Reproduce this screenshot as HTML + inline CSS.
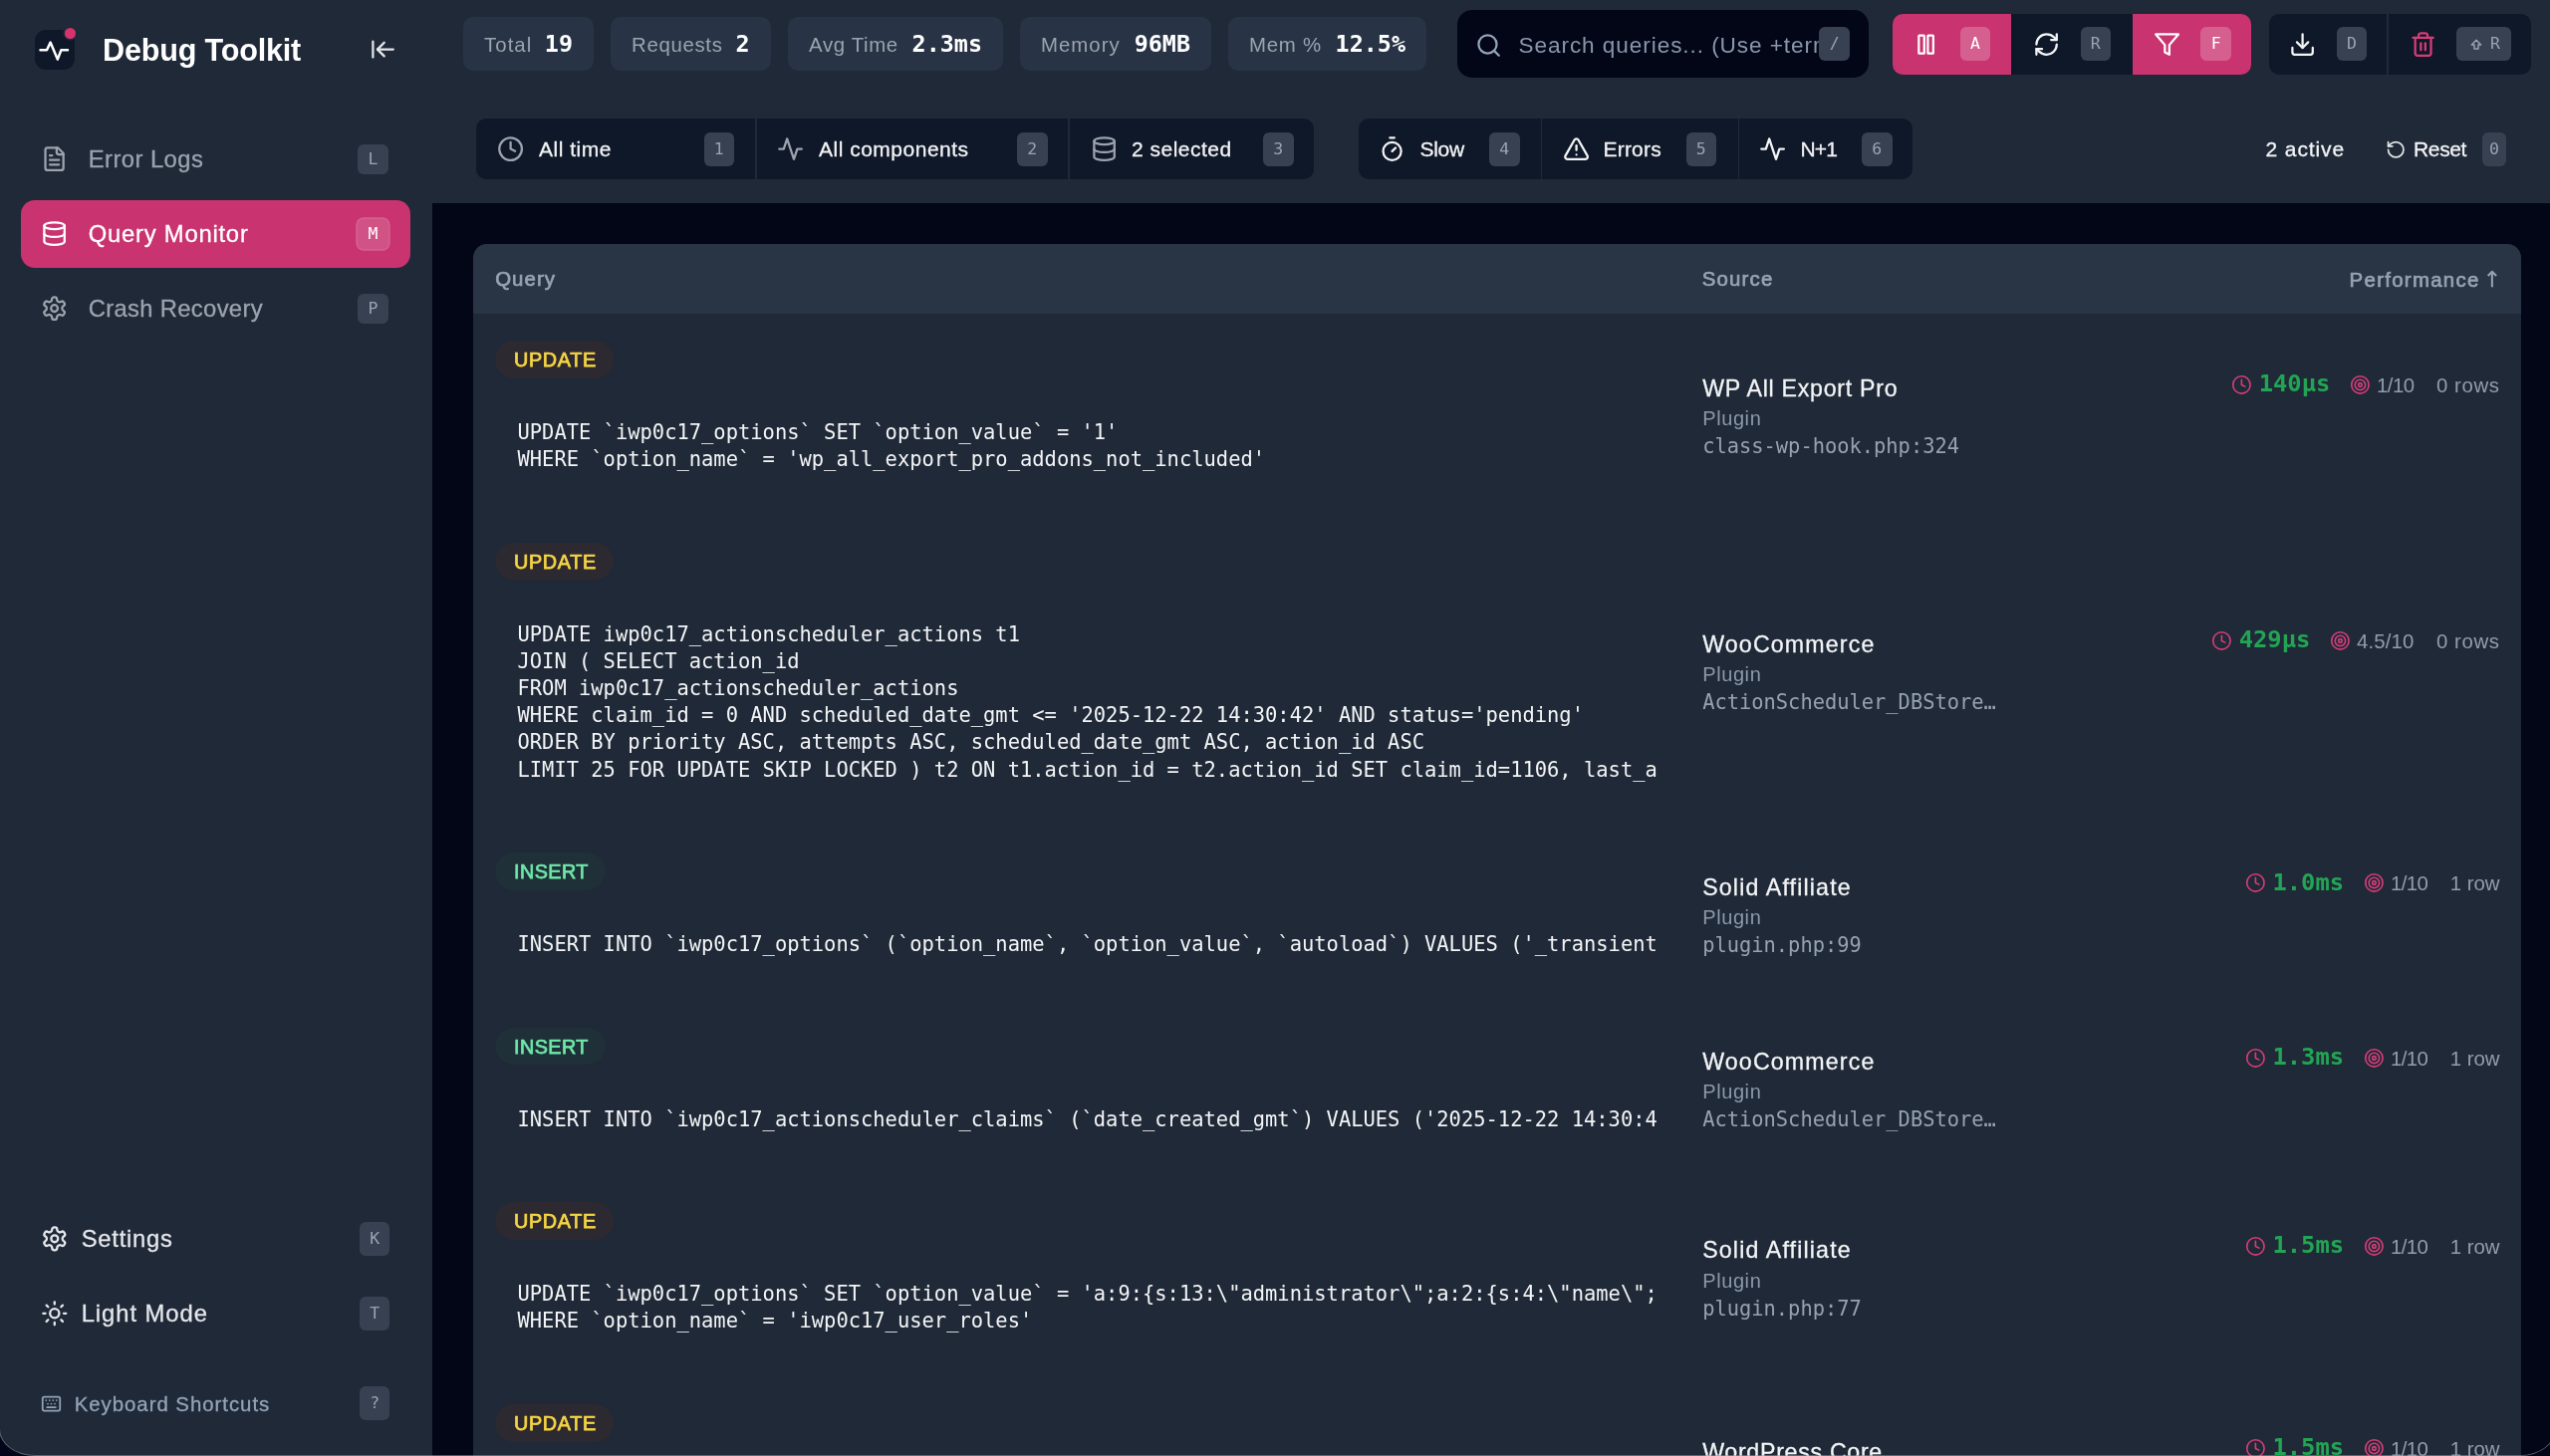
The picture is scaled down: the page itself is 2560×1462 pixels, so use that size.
<!DOCTYPE html>
<html lang="en">
<head>
<meta charset="utf-8">
<title>Debug Toolkit - Query Monitor</title>
<style>
*{box-sizing:border-box;margin:0;padding:0}
html,body{width:2560px;height:1462px;overflow:hidden;background:#020617}
body{position:relative;font-family:"Liberation Sans",sans-serif;color:#f3f4f6;-webkit-font-smoothing:antialiased}
.mono{font-family:"DejaVu Sans Mono","Liberation Mono",monospace}
svg{display:block;fill:none;stroke:currentColor;stroke-width:2;stroke-linecap:round;stroke-linejoin:round}
.abs{position:absolute}
#app{position:absolute;left:0;top:0;width:2560px;height:1462px;overflow:hidden;will-change:transform}
/* ---------- sidebar ---------- */
.sidebar{z-index:2;position:absolute;left:0;top:0;width:434px;height:1462px;background:#1f2937}
.logo{position:absolute;left:34.5px;top:29.5px;width:40px;height:40.5px;border-radius:11px;background:#0f1828;color:#fff}
.logo svg{position:absolute;left:0;top:0;width:40px;height:40px;stroke-width:2.5}
.logo i{position:absolute;left:30.2px;top:-1.2px;width:11px;height:11px;border-radius:50%;background:#d6336c;box-shadow:0 0 0 1.7px #1f2937}
.brand{position:absolute;left:103px;top:30px;height:40px;line-height:40px;font-size:30.6px;font-weight:700;color:#fff;white-space:nowrap;letter-spacing:-.2px}
.collapse{position:absolute;left:370.9px;top:36px;width:27.2px;height:27.2px;color:#e5e7eb}
.nav{position:absolute;left:20.7px;width:391.4px;height:68px;border-radius:14px;color:#9ca3af;font-size:23.8px;font-weight:500}
.nav svg{position:absolute;left:20.2px;top:20.3px;width:27.2px;height:27.2px;stroke-width:2}
.nav span{-webkit-text-stroke:.3px currentColor;position:absolute;left:68px;top:0;height:68px;line-height:68.6px;white-space:nowrap;letter-spacing:.45px}
.nav.active{background:#c9336f;color:#fff}
kbd{font-family:"DejaVu Sans Mono","Liberation Mono",monospace;font-style:normal;display:block;background:#374151;color:#9ca3af;border-radius:6px;text-align:center;font-size:16.5px;width:30.5px;height:30.6px;line-height:30.6px}
.nav kbd{position:absolute;left:338.6px;top:18.6px}
.nav.active kbd{background:rgba(255,255,255,.16);color:#fff;box-shadow:0 0 0 1.7px rgba(255,255,255,.22)}
.nav.low{color:#e5e7eb}
.nav.low svg{left:20.2px;width:27.6px;height:27.6px}
.nav.low span{left:61px}
.nav.low kbd{left:340.3px;top:17px;height:34px;line-height:34px}
.nav.tiny{color:#94a3b8;font-size:20.4px}
.nav.tiny svg{left:20px;top:24px;width:21px;height:21px}
.nav.tiny span{left:54px;letter-spacing:.5px;line-height:70.5px}
/* ---------- header ---------- */
.header{position:absolute;left:0;top:0;width:2560px;height:204px;background:#1f2937}
.pill{position:absolute;top:17px;height:54px;border-radius:10px;background:#283445;white-space:nowrap}
.pill b{position:absolute;top:0;line-height:56px;font-weight:400;font-size:20.4px;color:#9ca3af;left:21px;letter-spacing:.45px}
.pill em{position:absolute;top:0;line-height:55px;font-style:normal;font-weight:700;font-size:23.4px;color:#fff;right:21px}
.search{position:absolute;left:1463px;top:10px;width:413px;height:68px;border-radius:15px;background:#020617;color:#9ca3af;overflow:hidden}
.search svg{position:absolute;left:18.3px;top:22px;width:27.2px;height:27.2px;color:#94a3b8}
.search span{position:absolute;left:61.5px;top:0;line-height:71px;font-size:22.6px;white-space:nowrap;width:302px;overflow:hidden;letter-spacing:.92px;color:#8a97aa}
.search kbd{position:absolute;left:363.4px;top:17px;width:30.6px;height:34px;line-height:34px}
.grp{position:absolute;top:13.6px;height:61.2px;border-radius:10px;background:#0f1828;overflow:hidden}
.btn{position:absolute;top:0;height:61px;color:#f3f4f6}
.btn.on{background:#c9336f;color:#fff}
.btn svg{position:absolute;top:17px;width:27.2px;height:27.2px}
.btn kbd{position:absolute;top:13.6px;width:30.5px;height:34px;line-height:34px}
.btn.on kbd{background:rgba(255,255,255,.22);color:#fff}
.sep{position:absolute;top:0;width:1.7px;height:100%;background:#1f2937}
.fgrp{position:absolute;top:119px;height:61.2px;border-radius:10px;background:#0f1828;overflow:hidden}
.fb{position:absolute;top:0;height:61px;color:#f3f4f6;font-size:21px;font-weight:500;-webkit-text-stroke:.3px currentColor}
.fb svg{position:absolute;top:17px;width:27.2px;height:27.2px;color:#f3f4f6}
.fb.g svg{color:#9ca3af}
.fb span{position:absolute;top:0;line-height:61px;white-space:nowrap;letter-spacing:.5px}
.fb kbd{-webkit-text-stroke:0;position:absolute;top:14px;width:30.5px;height:34px;line-height:34px}
.active2{-webkit-text-stroke:.3px currentColor;position:absolute;top:119px;line-height:61px;font-size:21px;font-weight:500;color:#f3f4f6;white-space:nowrap;letter-spacing:.5px}
/* ---------- table ---------- */
.card{position:absolute;left:475.2px;top:245px;width:2055.4px;height:1300px;background:#1f2937;border-radius:14px 14px 0 0;overflow:hidden}
.thead{position:absolute;left:0;top:0;width:100%;height:69.5px;background:#293444;color:#98a2b1;font-size:20.4px;font-weight:400;-webkit-text-stroke:.7px currentColor}
.thead span{position:absolute;top:0;line-height:71.8px;white-space:nowrap;letter-spacing:.35px}
.row{position:absolute;left:0;width:100%}
.badge{position:absolute;left:21.9px;top:27.2px;height:37.6px;line-height:38.4px;border-radius:19px;padding:0 0 0 19px;width:119px;font-size:19.8px;font-weight:400;-webkit-text-stroke:.75px currentColor;letter-spacing:.65px}
.badge.i{width:111.3px;letter-spacing:.42px}
.badge.u{background:#2d2931;color:#f5d442}
.badge.i{background:#1f3038;color:#6ee7a8}
pre{position:absolute;left:44.3px;top:105.9px;width:1143.5px;overflow:hidden;font-family:"DejaVu Sans Mono","Liberation Mono",monospace;font-size:20.45px;line-height:27.2px;color:#f3f4f6;white-space:pre}
.src{position:absolute;left:1234px;white-space:nowrap}
.src .n{position:relative;top:1px;font-size:23.2px;font-weight:500;color:#f3f4f6;line-height:34px;letter-spacing:1.15px;-webkit-text-stroke:.3px currentColor}
.src .t{position:relative;top:1.2px;font-size:20px;color:#8c98aa;line-height:27.2px;letter-spacing:.6px}
.src .f{position:relative;top:2px;font-size:20.4px;color:#96a2b2;line-height:27.2px}
.perf{position:absolute;right:21px;height:30px;white-space:nowrap;display:flex;align-items:center;color:#929dae;font-size:20.4px}
.perf svg{width:20.8px;height:20.8px;color:#d63d78;flex:none;stroke-width:1.9}
.perf .v{position:relative;top:-1px;font-weight:700;font-size:23.8px;color:#23a455;margin-left:6.6px;margin-right:20px}
.perf .s{margin-left:6px;margin-right:22.5px;letter-spacing:-.6px;position:relative;top:1px}
.perf .r{letter-spacing:.6px;position:relative;top:1px}
.frame{z-index:10;position:absolute;left:-.6px;top:-40px;width:2567px;height:1502px;border-radius:36px / 27px;border:1.3px solid rgba(140,155,175,.55);box-shadow:0 0 0 1.5px rgba(5,8,18,.9),0 0 0 40px #03061a;pointer-events:none}
</style>
</head>
<body>
<div id="app">
<div class="sidebar">
  <div class="logo"><svg viewBox="0 0 40 40"><path d="M5.5 20.3H12L15.6 12.6L22.8 29.6L26.4 20.3H33"/></svg><i></i></div>
  <div class="brand">Debug Toolkit</div>
  <svg class="collapse" viewBox="0 0 24 24"><path d="M3 19V5"/><path d="m13 6-6 6 6 6"/><path d="M7 12h14"/></svg>

  <div class="nav" style="top:126px">
    <svg viewBox="0 0 24 24"><path d="M15 2H6a2 2 0 0 0-2 2v16a2 2 0 0 0 2 2h12a2 2 0 0 0 2-2V7Z"/><path d="M14 2v4a2 2 0 0 0 2 2h4"/><path d="M10 9H8"/><path d="M16 13H8"/><path d="M16 17H8"/></svg>
    <span>Error Logs</span><kbd>L</kbd>
  </div>
  <div class="nav active" style="top:201px">
    <svg viewBox="0 0 24 24"><ellipse cx="12" cy="5" rx="9" ry="3"/><path d="M3 5V19A9 3 0 0 0 21 19V5"/><path d="M3 12A9 3 0 0 0 21 12"/></svg>
    <span style="letter-spacing:0.78px">Query Monitor</span><kbd>M</kbd>
  </div>
  <div class="nav" style="top:276px">
    <svg viewBox="0 0 24 24"><path d="M12.22 2h-.44a2 2 0 0 0-2 2v.18a2 2 0 0 1-1 1.73l-.43.25a2 2 0 0 1-2 0l-.15-.08a2 2 0 0 0-2.73.73l-.22.38a2 2 0 0 0 .73 2.73l.15.1a2 2 0 0 1 1 1.72v.51a2 2 0 0 1-1 1.74l-.15.09a2 2 0 0 0-.73 2.73l.22.38a2 2 0 0 0 2.73.73l.15-.08a2 2 0 0 1 2 0l.43.25a2 2 0 0 1 1 1.73V20a2 2 0 0 0 2 2h.44a2 2 0 0 0 2-2v-.18a2 2 0 0 1 1-1.73l.43-.25a2 2 0 0 1 2 0l.15.08a2 2 0 0 0 2.73-.73l.22-.39a2 2 0 0 0-.73-2.73l-.15-.08a2 2 0 0 1-1-1.74v-.5a2 2 0 0 1 1-1.74l.15-.09a2 2 0 0 0 .73-2.73l-.22-.38a2 2 0 0 0-2.73-.73l-.15.08a2 2 0 0 1-2 0l-.43-.25a2 2 0 0 1-1-1.73V4a2 2 0 0 0-2-2z"/><circle cx="12" cy="12" r="3"/></svg>
    <span style="letter-spacing:0.33px">Crash Recovery</span><kbd>P</kbd>
  </div>

  <div class="nav low" style="top:1210px">
    <svg viewBox="0 0 24 24"><path d="M12.22 2h-.44a2 2 0 0 0-2 2v.18a2 2 0 0 1-1 1.73l-.43.25a2 2 0 0 1-2 0l-.15-.08a2 2 0 0 0-2.73.73l-.22.38a2 2 0 0 0 .73 2.73l.15.1a2 2 0 0 1 1 1.72v.51a2 2 0 0 1-1 1.74l-.15.09a2 2 0 0 0-.73 2.73l.22.38a2 2 0 0 0 2.73.73l.15-.08a2 2 0 0 1 2 0l.43.25a2 2 0 0 1 1 1.73V20a2 2 0 0 0 2 2h.44a2 2 0 0 0 2-2v-.18a2 2 0 0 1 1-1.73l.43-.25a2 2 0 0 1 2 0l.15.08a2 2 0 0 0 2.73-.73l.22-.39a2 2 0 0 0-.73-2.73l-.15-.08a2 2 0 0 1-1-1.74v-.5a2 2 0 0 1 1-1.74l.15-.09a2 2 0 0 0 .73-2.73l-.22-.38a2 2 0 0 0-2.73-.73l-.15.08a2 2 0 0 1-2 0l-.43-.25a2 2 0 0 1-1-1.73V4a2 2 0 0 0-2-2z"/><circle cx="12" cy="12" r="3"/></svg>
    <span style="letter-spacing:0.76px">Settings</span><kbd>K</kbd>
  </div>
  <div class="nav low" style="top:1285px">
    <svg viewBox="0 0 24 24"><circle cx="12" cy="12" r="4"/><path d="M12 2v2"/><path d="M12 20v2"/><path d="m4.93 4.93 1.41 1.41"/><path d="m17.66 17.66 1.41 1.41"/><path d="M2 12h2"/><path d="M20 12h2"/><path d="m6.34 17.66-1.41 1.41"/><path d="m19.07 4.93-1.41 1.41"/></svg>
    <span style="letter-spacing:0.95px">Light Mode</span><kbd>T</kbd>
  </div>
  <div class="nav low tiny" style="top:1375px">
    <svg viewBox="0 0 24 24"><rect width="20" height="16" x="2" y="4" rx="2"/><path d="M6 8h.01"/><path d="M10 8h.01"/><path d="M14 8h.01"/><path d="M18 8h.01"/><path d="M8 12h.01"/><path d="M12 12h.01"/><path d="M16 12h.01"/><path d="M7 16h10"/></svg>
    <span style="letter-spacing:0.97px">Keyboard Shortcuts</span><kbd>?</kbd>
  </div>
</div>

<div class="header" style="left:0;width:2560px"></div>
<div class="pill" style="left:465px;width:131px"><b style="letter-spacing:1.05px">Total</b><em class="mono">19</em></div>
<div class="pill" style="left:613px;width:160.5px"><b style="letter-spacing:0.68px">Requests</b><em class="mono">2</em></div>
<div class="pill" style="left:791px;width:216px"><b style="letter-spacing:0.65px">Avg Time</b><em class="mono">2.3ms</em></div>
<div class="pill" style="left:1024px;width:192px"><b style="letter-spacing:1.0px">Memory</b><em class="mono">96MB</em></div>
<div class="pill" style="left:1233px;width:199px"><b style="letter-spacing:0.75px">Mem %</b><em class="mono">12.5%</em></div>

<div class="search">
  <svg viewBox="0 0 24 24"><circle cx="11" cy="11" r="8"/><path d="m21 21-4.3-4.3"/></svg>
  <span>Search queries... (Use +term, -term, "phrase")</span>
  <kbd>/</kbd>
</div>

<div class="grp" style="left:1899.6px;width:360.8px">
  <div class="btn on" style="left:0;width:119.4px">
    <svg viewBox="0 0 24 24" style="left:20.5px"><rect x="13.6" y="4" width="4.8" height="16" rx=".4"/><rect x="5.6" y="4" width="4.8" height="16" rx=".4"/></svg>
    <kbd style="left:68px">A</kbd>
  </div>
  <div class="btn" style="left:119.4px;width:122px">
    <svg viewBox="0 0 24 24" style="left:21.8px"><path d="M3 12a9 9 0 0 1 9-9 9.75 9.75 0 0 1 6.74 2.74L21 8"/><path d="M21 3v5h-5"/><path d="M21 12a9 9 0 0 1-9 9 9.75 9.75 0 0 1-6.74-2.74L3 16"/><path d="M8 16H3v5"/></svg>
    <kbd style="left:69.6px">R</kbd>
  </div>
  <div class="btn on" style="left:241.4px;width:119.4px">
    <svg viewBox="0 0 24 24" style="left:20.9px"><polygon points="22 3 2 3 10 12.46 10 19 14 21 14 12.46 22 3"/></svg>
    <kbd style="left:68.4px">F</kbd>
  </div>
</div>
<div class="grp" style="left:2278px;width:263.2px">
  <div class="btn" style="left:0;width:119px">
    <svg viewBox="0 0 24 24" style="left:19.7px"><path d="M21 15v4a2 2 0 0 1-2 2H5a2 2 0 0 1-2-2v-4"/><polyline points="7 10 12 15 17 10"/><line x1="12" x2="12" y1="15" y2="3"/></svg>
    <kbd style="left:67.7px">D</kbd>
  </div>
  <div class="sep" style="left:118.2px"></div>
  <div class="btn" style="left:120px;width:143.2px">
    <svg viewBox="0 0 24 24" style="left:20.9px;color:#d63d78"><path d="M3 6h18"/><path d="M19 6v14c0 1-1 2-2 2H7c-1 0-2-1-2-2V6"/><path d="M8 6V4c0-1 1-2 2-2h4c1 0 2 1 2 2v2"/><line x1="10" x2="10" y1="11" y2="17"/><line x1="14" x2="14" y1="11" y2="17"/></svg>
    <kbd style="left:68px;width:55px"><svg viewBox="0 0 24 24" style="position:absolute;left:12px;top:9.5px;width:16px;height:16px;stroke-width:2.2"><path d="M9 18v-6H5l7-7 7 7h-4v6H9z"/></svg><span style="position:absolute;left:34px">R</span></kbd>
  </div>
</div>

<div class="fgrp" style="left:478px;width:841px">
  <div class="fb g" style="left:0;width:280px">
    <svg viewBox="0 0 24 24" style="left:20.5px"><circle cx="12" cy="12" r="10"/><polyline points="12 6 12 12 16 14"/></svg>
    <span style="left:63px">All time</span><kbd style="left:228.5px">1</kbd>
  </div>
  <div class="sep" style="left:280px"></div>
  <div class="fb g" style="left:282px;width:312px">
    <svg viewBox="0 0 24 24" style="left:20px"><path d="M22 12h-4l-3 9L9 3l-3 9H2"/></svg>
    <span style="left:62px">All components</span><kbd style="left:261px">2</kbd>
  </div>
  <div class="sep" style="left:594px"></div>
  <div class="fb g" style="left:596px;width:245px">
    <svg viewBox="0 0 24 24" style="left:21px"><ellipse cx="12" cy="5" rx="9" ry="3"/><path d="M3 5V19A9 3 0 0 0 21 19V5"/><path d="M3 12A9 3 0 0 0 21 12"/></svg>
    <span style="left:62px">2 selected</span><kbd style="left:194px">3</kbd>
  </div>
</div>
<div class="fgrp" style="left:1363.5px;width:556px">
  <div class="fb" style="left:0;width:183px">
    <svg viewBox="0 0 24 24" style="left:20.5px"><line x1="10" x2="14" y1="2" y2="2"/><line x1="12" x2="15" y1="14" y2="11"/><circle cx="12" cy="14" r="8"/></svg>
    <span style="left:62px;letter-spacing:-.3px">Slow</span><kbd style="left:131.5px">4</kbd>
  </div>
  <div class="sep" style="left:183px"></div>
  <div class="fb" style="left:185px;width:196px">
    <svg viewBox="0 0 24 24" style="left:20px"><path d="m21.73 18-8-14a2 2 0 0 0-3.48 0l-8 14A2 2 0 0 0 4 21h16a2 2 0 0 0 1.73-3"/><path d="M12 9v4"/><path d="M12 17h.01"/></svg>
    <span style="left:61px;letter-spacing:.2px">Errors</span><kbd style="left:144px">5</kbd>
  </div>
  <div class="sep" style="left:381px"></div>
  <div class="fb" style="left:383px;width:173px">
    <svg viewBox="0 0 24 24" style="left:19.5px"><path d="M22 12h-4l-3 9L9 3l-3 9H2"/></svg>
    <span style="left:61px;letter-spacing:-.9px">N+1</span><kbd style="left:122.5px">6</kbd>
  </div>
</div>
<div class="active2" style="left:2274.5px;letter-spacing:.9px">2 active</div>
<svg class="abs" viewBox="0 0 24 24" style="left:2394.5px;top:139.5px;width:20.5px;height:20.5px;color:#e5e7eb"><path d="M3 12a9 9 0 1 0 9-9 9.75 9.75 0 0 0-6.74 2.74L3 8"/><path d="M3 3v5h5"/></svg>
<div class="active2" style="left:2423px;letter-spacing:-.35px">Reset</div>
<kbd class="abs" style="left:2492px;top:133px;width:24px;height:34px;line-height:34px">0</kbd>

<div class="card">
<div class="thead"><span style="left:22px;letter-spacing:1.05px">Query</span><span style="left:1233.5px;letter-spacing:1.2px">Source</span><span style="right:19.5px;letter-spacing:1.3px">Performance<i style="font-style:normal;font-family:'DejaVu Sans',sans-serif;-webkit-text-stroke:.3px currentColor;font-size:22px;letter-spacing:0;margin-left:3px">↑</i></span></div>
<div class="row" style="top:70.0px;height:202.7px">
  <div class="badge u">UPDATE</div>
  <pre>UPDATE `iwp0c17_options` SET `option_value` = '1'
WHERE `option_name` = 'wp_all_export_pro_addons_not_included'</pre>
  <div class="src" style="top:57.2px"><div class="n" style="letter-spacing:.72px">WP All Export Pro</div><div class="t">Plugin</div><div class="f mono">class-wp-hook.php:324</div></div>
  <div class="perf" style="top:56.2px"><svg viewBox="0 0 24 24"><circle cx="12" cy="12" r="10"/><polyline points="12 6 12 12 16 14"/></svg><span class="v mono">140µs</span><svg viewBox="0 0 24 24"><circle cx="12" cy="12" r="10"/><circle cx="12" cy="12" r="6"/><circle cx="12" cy="12" r="2"/></svg><span class="s">1/10</span><span class="r">0 rows</span></div>
</div>
<div class="row" style="top:272.7px;height:311.5px">
  <div class="badge u">UPDATE</div>
  <pre>UPDATE iwp0c17_actionscheduler_actions t1
JOIN ( SELECT action_id
FROM iwp0c17_actionscheduler_actions
WHERE claim_id = 0 AND scheduled_date_gmt &lt;= '2025-12-22 14:30:42' AND status='pending'
ORDER BY priority ASC, attempts ASC, scheduled_date_gmt ASC, action_id ASC
LIMIT 25 FOR UPDATE SKIP LOCKED ) t2 ON t1.action_id = t2.action_id SET claim_id=1106, last_attempt_gmt = '2025-12-22 14:30:42', last_attempt_local = '2025-12-22 14:30:42'</pre>
  <div class="src" style="top:111.5px"><div class="n">WooCommerce</div><div class="t">Plugin</div><div class="f mono">ActionScheduler_DBStore…</div></div>
  <div class="perf" style="top:110.5px"><svg viewBox="0 0 24 24"><circle cx="12" cy="12" r="10"/><polyline points="12 6 12 12 16 14"/></svg><span class="v mono">429µs</span><svg viewBox="0 0 24 24"><circle cx="12" cy="12" r="10"/><circle cx="12" cy="12" r="6"/><circle cx="12" cy="12" r="2"/></svg><span class="s" style="letter-spacing:.1px">4.5/10</span><span class="r">0 rows</span></div>
</div>
<div class="row" style="top:584.2px;height:175.5px">
  <div class="badge i">INSERT</div>
  <pre>INSERT INTO `iwp0c17_options` (`option_name`, `option_value`, `autoload`) VALUES ('_transient_doing_cron', '1766413842.2460360527038574218750', 'on')</pre>
  <div class="src" style="top:43.5px"><div class="n">Solid Affiliate</div><div class="t">Plugin</div><div class="f mono">plugin.php:99</div></div>
  <div class="perf" style="top:42.5px"><svg viewBox="0 0 24 24"><circle cx="12" cy="12" r="10"/><polyline points="12 6 12 12 16 14"/></svg><span class="v mono">1.0ms</span><svg viewBox="0 0 24 24"><circle cx="12" cy="12" r="10"/><circle cx="12" cy="12" r="6"/><circle cx="12" cy="12" r="2"/></svg><span class="s">1/10</span><span class="r" style="letter-spacing:0">1 row</span></div>
</div>
<div class="row" style="top:759.7px;height:175.5px">
  <div class="badge i">INSERT</div>
  <pre>INSERT INTO `iwp0c17_actionscheduler_claims` (`date_created_gmt`) VALUES ('2025-12-22 14:30:42')</pre>
  <div class="src" style="top:43.5px"><div class="n">WooCommerce</div><div class="t">Plugin</div><div class="f mono">ActionScheduler_DBStore…</div></div>
  <div class="perf" style="top:42.5px"><svg viewBox="0 0 24 24"><circle cx="12" cy="12" r="10"/><polyline points="12 6 12 12 16 14"/></svg><span class="v mono">1.3ms</span><svg viewBox="0 0 24 24"><circle cx="12" cy="12" r="10"/><circle cx="12" cy="12" r="6"/><circle cx="12" cy="12" r="2"/></svg><span class="s">1/10</span><span class="r" style="letter-spacing:0">1 row</span></div>
</div>
<div class="row" style="top:935.2px;height:202.7px">
  <div class="badge u">UPDATE</div>
  <pre>UPDATE `iwp0c17_options` SET `option_value` = 'a:9:{s:13:\"administrator\";a:2:{s:4:\"name\";s:13:\"Administrator\";s:12:\"capabilities\";a:1:{}}}'
WHERE `option_name` = 'iwp0c17_user_roles'</pre>
  <div class="src" style="top:57.2px"><div class="n">Solid Affiliate</div><div class="t">Plugin</div><div class="f mono">plugin.php:77</div></div>
  <div class="perf" style="top:56.2px"><svg viewBox="0 0 24 24"><circle cx="12" cy="12" r="10"/><polyline points="12 6 12 12 16 14"/></svg><span class="v mono">1.5ms</span><svg viewBox="0 0 24 24"><circle cx="12" cy="12" r="10"/><circle cx="12" cy="12" r="6"/><circle cx="12" cy="12" r="2"/></svg><span class="s">1/10</span><span class="r" style="letter-spacing:0">1 row</span></div>
</div>
<div class="row" style="top:1137.9px;height:202.7px">
  <div class="badge u">UPDATE</div>
  <pre>UPDATE `iwp0c17_options` SET `option_value` = '1766413842'
WHERE `option_name` = '_transient_timeout_doing_cron'</pre>
  <div class="src" style="top:57.2px"><div class="n" style="letter-spacing:.7px">WordPress Core</div><div class="t">Core</div><div class="f mono">option.php:812</div></div>
  <div class="perf" style="top:56.2px"><svg viewBox="0 0 24 24"><circle cx="12" cy="12" r="10"/><polyline points="12 6 12 12 16 14"/></svg><span class="v mono">1.5ms</span><svg viewBox="0 0 24 24"><circle cx="12" cy="12" r="10"/><circle cx="12" cy="12" r="6"/><circle cx="12" cy="12" r="2"/></svg><span class="s">1/10</span><span class="r" style="letter-spacing:0">1 row</span></div>
</div>
</div>
<div class="frame"></div>
</div>
</body>
</html>
